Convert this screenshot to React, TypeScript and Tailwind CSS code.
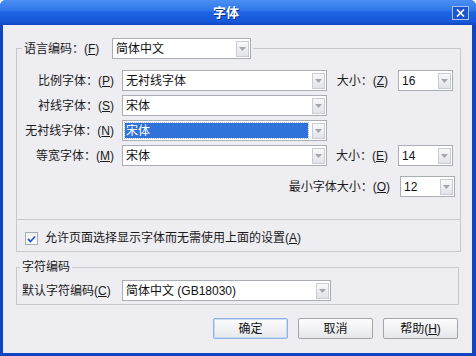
import React from "react";

const FONT = { fontFamily: '"Liberation Sans", "Noto Sans CJK SC", sans-serif' };

function DropBtn() {
  return (
    <div className="w-[13px] h-[16px] ml-[4px] shrink-0 border border-[#c9ccd2] bg-linear-to-b from-[#f8f8fa] to-[#e2e3e8] flex items-center justify-center">
      <svg width="7" height="4" viewBox="0 0 7 4">
        <path d="M0 0 L7 0 L3.5 4 Z" fill="#a4a6ab" />
      </svg>
    </div>
  );
}

function Combo({ value, w, selected }: { value: string; w: string; selected?: boolean }) {
  return (
    <div className={"h-[21px] shrink-0 border border-[#a9adb5] bg-white flex items-center pl-[2px] pr-[1px] " + w}>
      {selected ? (
        <div className="flex-1 h-[15px] flex items-center pl-[1px] bg-[#2f72d9] text-white outline outline-dotted outline-[#a9c0ea] leading-none">
          {value}
        </div>
      ) : (
        <div className="flex-1 h-[15px] flex items-center pl-[1px] text-[#111] leading-none whitespace-nowrap">{value}</div>
      )}
      <DropBtn />
    </div>
  );
}

function L({ text, k, tail = "" }: { text: string; k: string; tail?: string }) {
  return (
    <span className="whitespace-nowrap">
      {text}(<span className="underline">{k}</span>){tail}
    </span>
  );
}

function Btn({ children, def }: { children: React.ReactNode; def?: boolean }) {
  return (
    <div
      className={
        "w-[75px] h-[21px] rounded-[2px] border flex items-center justify-center text-[12px] text-[#111] bg-linear-to-b from-[#fdfdfe] to-[#e6e7eb] " +
        (def ? "border-[#8fb1e3] shadow-[inset_0_0_0_1px_#c9dcf5]" : "border-[#a3a5ab]")
      }
    >
      {children}
    </div>
  );
}

export default function App() {
  return (
    <div className="w-[476px] h-[356px] flex flex-col bg-[#0f45c2] rounded-t-[6px] overflow-hidden text-[12px] text-[#1a1a1a]" style={FONT}>
      {/* Title bar */}
      <div className="h-[25px] shrink-0 flex items-center bg-[linear-gradient(to_bottom,#4a90f4_0%,#3078ec_40%,#1c62e2_50%,#175ada_85%,#0f45c2_100%)]">
        <div className="flex-1 text-center text-white font-bold text-[13px] [text-shadow:1px_1px_0_#0a2f8a]">字体</div>
        <div className="w-[17px] h-[14px] mr-[7px] border border-[#a9c4f3] bg-[#1b54d2] flex items-center justify-center">
          <svg width="9" height="8" viewBox="0 0 9 8">
            <path d="M1 0.5 L8 7.5 M8 0.5 L1 7.5" stroke="#ffffff" strokeWidth="1.6" />
          </svg>
        </div>
      </div>

      {/* Client area */}
      <div className="flex-1 ml-[3px] mr-[4px] mb-[3px] bg-[#eeedf2] flex flex-col pt-[13px] pl-[13px]">
        {/* Group 1 */}
        <fieldset className="w-[445px] border border-[#c8c8cc] flex flex-col">
          <legend className="ml-[5px] px-[2px]">
            <div className="flex items-center">
              <span className="w-[88px] whitespace-nowrap">
                语言编码：(<span className="underline">F</span>)
              </span>
              <Combo value="简体中文" w="w-[139px]" />
            </div>
          </legend>

          <div className="flex flex-col gap-[4px] mt-[11px]">
            <div className="flex items-center h-[21px]">
              <div className="w-[97px] text-right"><L text="比例字体：" k="P" /></div>
              <div className="ml-[8px]"><Combo value="无衬线字体" w="w-[205px]" /></div>
              <div className="w-[61px] text-right"><L text="大小：" k="Z" /></div>
              <div className="ml-[10px]"><Combo value="16" w="w-[55px]" /></div>
            </div>
            <div className="flex items-center h-[21px]">
              <div className="w-[97px] text-right"><L text="衬线字体：" k="S" /></div>
              <div className="ml-[8px]"><Combo value="宋体" w="w-[205px]" /></div>
            </div>
            <div className="flex items-center h-[21px]">
              <div className="w-[97px] text-right"><L text="无衬线字体：" k="N" /></div>
              <div className="ml-[8px]"><Combo value="宋体" w="w-[205px]" selected /></div>
            </div>
            <div className="flex items-center h-[21px]">
              <div className="w-[97px] text-right"><L text="等宽字体：" k="M" /></div>
              <div className="ml-[8px]"><Combo value="宋体" w="w-[205px]" /></div>
              <div className="w-[61px] text-right"><L text="大小：" k="E" /></div>
              <div className="ml-[10px]"><Combo value="14" w="w-[55px]" /></div>
            </div>
          </div>

          <div className="flex items-center justify-end h-[21px] mt-[10px] pr-[5px]">
            <L text="最小字体大小：" k="O" />
            <div className="ml-[10px]"><Combo value="12" w="w-[55px]" /></div>
          </div>

          <div className="mt-[22px] border-t border-[#c8c8cc] pt-[12px] pb-[6px] flex items-center">
            <div className="ml-[8px] w-[13px] h-[13px] border border-[#a7abb3] bg-linear-to-b from-[#f0f0f3] to-[#ffffff] flex items-center justify-center">
              <svg width="9" height="8" viewBox="0 0 9 8">
                <path d="M1 4 L3.5 6.5 L8 1.5" stroke="#2a5fcc" strokeWidth="1.8" fill="none" />
              </svg>
            </div>
            <span className="ml-[7px] whitespace-nowrap leading-[13px]">
              允许页面选择显示字体而无需使用上面的设置(<span className="underline">A</span>)
            </span>
          </div>
        </fieldset>

        {/* Group 2 */}
        <fieldset className="w-[443px] mt-[7px] border border-[#c8c8cc] flex flex-col pb-[3px]">
          <legend className="ml-[3px] px-[2px] leading-[16px]">字符编码</legend>
          <div className="flex items-center mt-[5px]">
            <div className="w-[100px] ml-[5px]">
              <L text="默认字符编码" k="C" />
            </div>
            <Combo value="简体中文 (GB18030)" w="w-[209px]" />
          </div>
        </fieldset>

        {/* Buttons */}
        <div className="flex justify-end gap-[10px] mt-[13px] mr-[14px]">
          <Btn def>确定</Btn>
          <Btn>取消</Btn>
          <Btn>
            帮助(<span className="underline">H</span>)
          </Btn>
        </div>
      </div>
    </div>
  );
}
